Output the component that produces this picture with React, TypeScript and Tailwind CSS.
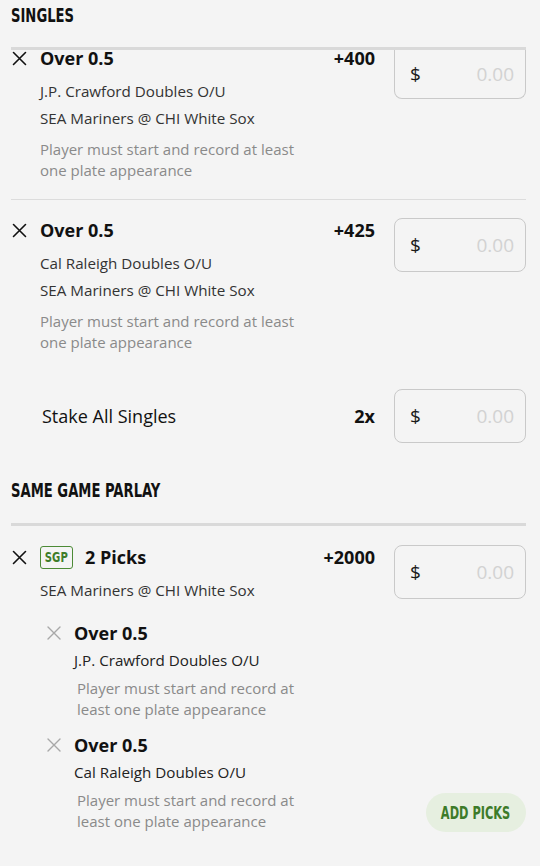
import React from "react";

const XIcon = ({ light = false }: { light?: boolean }) =>
  light ? (
    <svg width="14" height="14" viewBox="0 0 14 14" className="block">
      <path d="M1 1 L13 13 M13 1 L1 13" stroke="#a8a8a8" strokeWidth="1.4" strokeLinecap="round" />
    </svg>
  ) : (
    <svg width="15" height="15" viewBox="0 0 15 15" className="block">
      <path d="M1.5 1.5 L13.5 13.5 M13.5 1.5 L1.5 13.5" stroke="#111" strokeWidth="1.6" strokeLinecap="round" />
    </svg>
  );

const StakeBox = ({ cut = false }: { cut?: boolean }) => (
  <div
    className={`w-[132px] shrink-0 border border-[#c9c9c9] flex items-center justify-between pl-[15px] pr-[11px] ${
      cut ? "h-[49px] border-t-0 rounded-b-[8px] pt-[1px]" : "h-[54px] rounded-[8px]"
    }`}
  >
    <span className="text-[19px] text-[#1a1a1a] leading-none">$</span>
    <span className="text-[19px] text-[#d2d2d2] leading-none">0.00</span>
  </div>
);

const Heading = ({ children }: { children: React.ReactNode }) => (
  <div className="h-[24px] flex items-center">
    <span className="inline-block origin-left scale-x-[0.77] whitespace-nowrap font-['DejaVu_Sans_Condensed',sans-serif] font-bold text-[19px] text-[#111] leading-none">
      {children}
    </span>
  </div>
);

const Single = ({ player, odds, first = false }: { player: string; odds: string; first?: boolean }) => (
  <div className={first ? "border-b border-[#dcdcdc] pb-[18px]" : "pt-[18px]"}>
    <div className="flex items-start">
      <div className={`w-[29px] shrink-0 flex items-center pl-[1px] ${first ? "h-[16px]" : "h-[24px]"}`}>
        <XIcon />
      </div>
      <div className="flex-1">
        <div className={`text-[18px] font-bold text-[#111] ${first ? "leading-[16px]" : "leading-[24px]"}`}>Over 0.5</div>
        <div className={`${first ? "mt-[15px]" : "mt-[11px]"} text-[15.2px] text-[#333] leading-[20px]`}>{player} Doubles O/U</div>
        <div className="mt-[7px] text-[15.2px] text-[#333] leading-[20px]">SEA Mariners @ CHI White Sox</div>
        <div className="mt-[11px] text-[15px] text-[#8a8a8a] leading-[21px]">
          Player must start and record at least
          <br />
          one plate appearance
        </div>
      </div>
      <div className={`text-[18px] font-bold text-[#111] mr-[19px] ${first ? "leading-[16px]" : "leading-[24px]"}`}>{odds}</div>
      <StakeBox cut={first} />
    </div>
  </div>
);

const Leg = ({ player }: { player: string }) => (
  <div className="flex items-start">
    <div className="w-[63px] shrink-0 pl-[36px] h-[24px] flex items-center">
      <XIcon light />
    </div>
    <div>
      <div className="text-[18px] font-bold text-[#111] leading-[24px]">Over 0.5</div>
      <div className="mt-[5px] text-[15.2px] text-[#222] leading-[20px]">{player} Doubles O/U</div>
      <div className="mt-[8px] pl-[3px] text-[15px] text-[#8a8a8a] leading-[21px]">
        Player must start and record at
        <br />
        least one plate appearance
      </div>
    </div>
  </div>
);

export default function App() {
  return (
    <div className="w-[540px] min-h-[866px] bg-[#f4f4f4] font-['Open_Sans',sans-serif] pl-[11px] pr-[14px] pt-[3px] overflow-hidden">
      <Heading>SINGLES</Heading>
      <div className="mt-[20px] h-[3px] bg-[#d9d9d9]" />
      <Single player="J.P. Crawford" odds="+400" first />
      <Single player="Cal Raleigh" odds="+425" />

      <div className="mt-[36px] flex items-center h-[54px]">
        <div className="flex-1 pl-[31px] text-[18px] text-[#111]">Stake All Singles</div>
        <div className="text-[18px] font-bold text-[#111] mr-[19px]">2x</div>
        <StakeBox />
      </div>

      <div className="mt-[35px]">
        <Heading>SAME GAME PARLAY</Heading>
      </div>
      <div className="mt-[21px] h-[3px] bg-[#d9d9d9]" />

      <div className="mt-[19px] flex items-start">
        <div className="w-[29px] shrink-0 h-[24px] flex items-center pl-[1px]">
          <XIcon />
        </div>
        <div className="flex-1">
          <div className="flex items-center h-[24px]">
            <div className="w-[33px] h-[23px] border-[1.5px] border-[#4c8a36] rounded-[3px] flex items-center justify-center mr-[12px]">
              <span className="inline-block scale-x-[0.8] whitespace-nowrap font-['DejaVu_Sans_Condensed',sans-serif] font-bold text-[14px] text-[#3f7d2a] leading-none">
                SGP
              </span>
            </div>
            <span className="text-[18px] font-bold text-[#111] leading-[24px]">2 Picks</span>
          </div>
          <div className="mt-[11px] text-[15.2px] text-[#333] leading-[20px]">SEA Mariners @ CHI White Sox</div>
        </div>
        <div className="text-[18px] font-bold text-[#111] leading-[24px] mr-[19px]">+2000</div>
        <StakeBox />
      </div>

      <div className="mt-[21px]">
        <Leg player="J.P. Crawford" />
      </div>
      <div className="mt-[13px] flex items-end justify-between">
        <Leg player="Cal Raleigh" />
        <button className="w-[100px] h-[39px] rounded-full bg-[#e6efe0] flex items-center justify-center">
          <span className="inline-block scale-x-[0.7] whitespace-nowrap font-['DejaVu_Sans_Condensed',sans-serif] font-bold text-[18px] text-[#3d7b29] leading-none">
            ADD PICKS
          </span>
        </button>
      </div>
    </div>
  );
}
